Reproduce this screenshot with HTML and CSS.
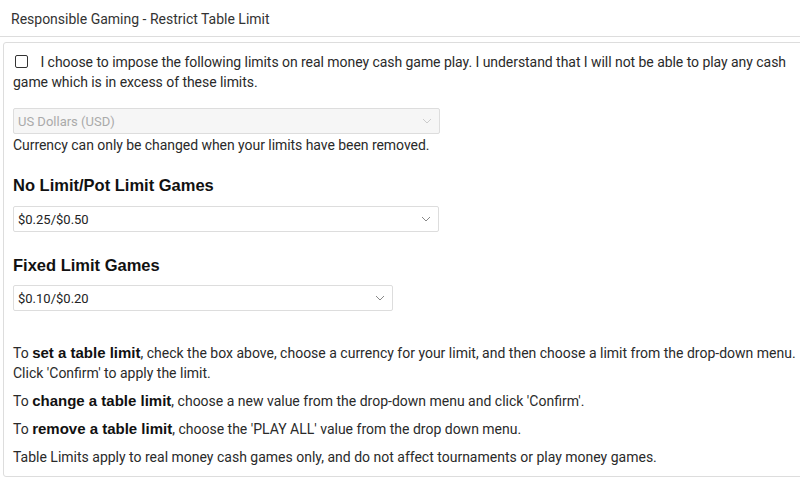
FILE: index.html
```html
<!DOCTYPE html>
<html lang="en">
<head>
  <meta charset="UTF-8">
  <title>Restrict Table Limit</title>
  <link rel="stylesheet" href="styles.css">
</head>
<body>
  <div class="title">Responsible Gaming - Restrict Table Limit</div>

  <div class="panel">
    <label class="agree">
      <span class="box"></span>
      I choose to impose the following limits on real money cash game play. I understand that I will not be able to play any cash game which is in excess of these limits.
    </label>

    <div class="select disabled w-currency">
      <span>US Dollars (USD)</span>
      <svg class="caret" viewBox="0 0 10 6" width="10" height="6"><path d="M1 1l4 4 4-4" fill="none" stroke="currentColor" stroke-width="1"/></svg>
    </div>
    <p class="note">Currency can only be changed when your limits have been removed.</p>

    <h2>No Limit/Pot Limit Games</h2>
    <div class="select w-nl">
      <span>$0.25/$0.50</span>
      <svg class="caret" viewBox="0 0 10 6" width="10" height="6"><path d="M1 1l4 4 4-4" fill="none" stroke="currentColor" stroke-width="1"/></svg>
    </div>

    <h2>Fixed Limit Games</h2>
    <div class="select w-fl">
      <span>$0.10/$0.20</span>
      <svg class="caret" viewBox="0 0 10 6" width="10" height="6"><path d="M1 1l4 4 4-4" fill="none" stroke="currentColor" stroke-width="1"/></svg>
    </div>

    <div class="help">
      <p>To <b>set a table limit</b>, check the box above, choose a currency for your limit, and then choose a limit from the drop-down menu. Click 'Confirm' to apply the limit.</p>
      <p>To <b>change a table limit</b>, choose a new value from the drop-down menu and click 'Confirm'.</p>
      <p>To <b>remove a table limit</b>, choose the 'PLAY ALL' value from the drop down menu.</p>
      <p>Table Limits apply to real money cash games only, and do not affect tournaments or play money games.</p>
    </div>
  </div>
</body>
</html>
```

FILE: styles.css
```css
body {
  margin: 0;
  font-family: Roboto, "Liberation Sans", sans-serif;
  font-size: 14px;
  color: #2a2a2a;
  background: #fff;
  overflow: hidden;
}
.title {
  height: 36px;
  line-height: 38px;
  padding-left: 11px;
  color: #333;
  border-bottom: 1px solid #ddd;
}
.panel {
  margin: 5px -6px 0 3px;
  padding: 9px 0 0 9px;
  border: 1px solid #ddd;
  border-radius: 3px;
  height: 435px;
  box-sizing: border-box;
}
.agree {
  display: block;
  line-height: 20px;
  letter-spacing: -0.05px;
}
.box {
  display: inline-block;
  width: 11px;
  height: 11px;
  border: 1px solid #333;
  border-radius: 2px;
  margin: 0 9px 0 2px;
  vertical-align: -1px;
}
.select {
  display: flex;
  align-items: center;
  justify-content: space-between;
  height: 26px;
  box-sizing: border-box;
  padding: 0 7px 0 4px;
  border: 1px solid #ddd;
  border-radius: 2px;
  background: #fff;
  color: #222;
  font-size: 13px;
}
.select .caret {
  color: #888;
}
.select.disabled {
  background: #f6f6f6;
  color: #aaa;
  margin-top: 16px;
}
.select.disabled .caret {
  color: #ccc;
}
.w-currency { width: 427px; }
.w-nl { width: 426px; }
.w-fl { width: 380px; }
.note {
  margin: 1px 0 0;
  line-height: 20px;
  letter-spacing: -0.05px;
}
h2 {
  font-family: "Liberation Sans", Arial, sans-serif;
  font-size: 16.5px;
  font-weight: bold;
  color: #111;
  margin: 21px 0 11px;
}
.select + h2 {
  margin-top: 24px;
  margin-bottom: 10px;
}
.help {
  margin-top: 32px;
}
.help p {
  margin: 0 0 8px;
  line-height: 20px;
}
.help b {
  font-family: "Liberation Sans", Arial, sans-serif;
  font-size: 15px;
  color: #111;
}
```
